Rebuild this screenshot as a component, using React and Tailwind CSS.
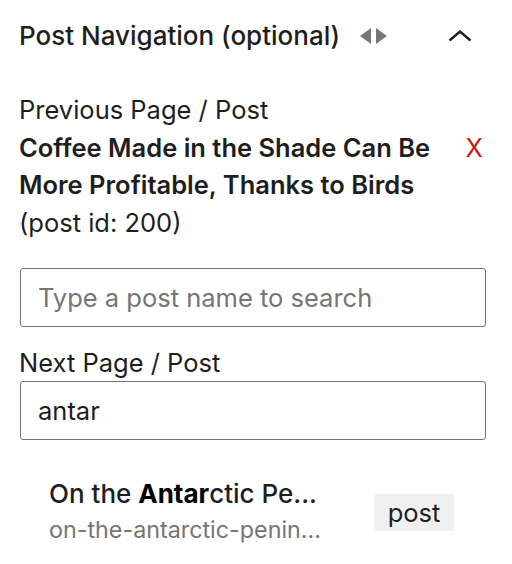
export default function App() {
  return (
    <div
      className="w-[512px] h-[564px] bg-white text-[#1e1e1e] overflow-hidden"
      style={{ fontFamily: 'Inter, "Noto Sans", sans-serif' }}
    >
      {/* Panel header */}
      <div className="flex items-center h-[71px] pl-[19px] pr-[40px]">
        <span className="text-[26px] font-medium">Post Navigation (optional)</span>
        <svg className="ml-[20px]" width="28" height="16" viewBox="0 0 28 16">
          <polygon points="0,8 11,0 11,16" fill="#777" />
          <polygon points="16,0 27,8 16,16" fill="#777" />
        </svg>
        <svg className="ml-auto" width="24" height="12" viewBox="0 0 24 12">
          <polyline points="1.5,10.5 12,1.5 22.5,10.5" fill="none" stroke="#1e1e1e" strokeWidth="2.4" />
        </svg>
      </div>

      <div className="pl-[19px] pr-[26px] pt-[20px] text-[25.5px] leading-[37.5px]">
        <div>Previous Page / Post</div>
        <div className="flex items-start">
          <div className="font-semibold w-[430px]">
            Coffee Made in the Shade Can Be More Profitable, Thanks to Birds
          </div>
          <span className="ml-auto mr-[3px] text-[#cc1818]">X</span>
        </div>
        <div>(post id: 200)</div>

        <div className="mt-[27px] ml-[1px] h-[59px] border-[1.5px] border-[#757575] rounded-[3px] flex items-center pl-[17px] text-[#757575]">
          Type a post name to search
        </div>

        <div className="mt-[18px] leading-[36px]">Next Page / Post</div>
        <div className="ml-[1px] h-[59px] border-[1.5px] border-[#757575] rounded-[3px] flex items-center pl-[17px]">
          antar
        </div>

        {/* Search suggestion */}
        <div className="flex items-center mt-[36px] pl-[30px]">
          <div className="flex flex-col w-[325px]">
            <span className="text-[26px] font-medium leading-[36px]">
              On the <strong className="font-bold text-black">Antar</strong>ctic Pe...
            </span>
            <span className="text-[23.3px] leading-[36px] text-[#757575]">on-the-antarctic-penin...</span>
          </div>
          <span className="bg-[#f0f0f0] rounded-[3px] w-[80px] text-center leading-[37px]">post</span>
        </div>
      </div>
    </div>
  );
}
